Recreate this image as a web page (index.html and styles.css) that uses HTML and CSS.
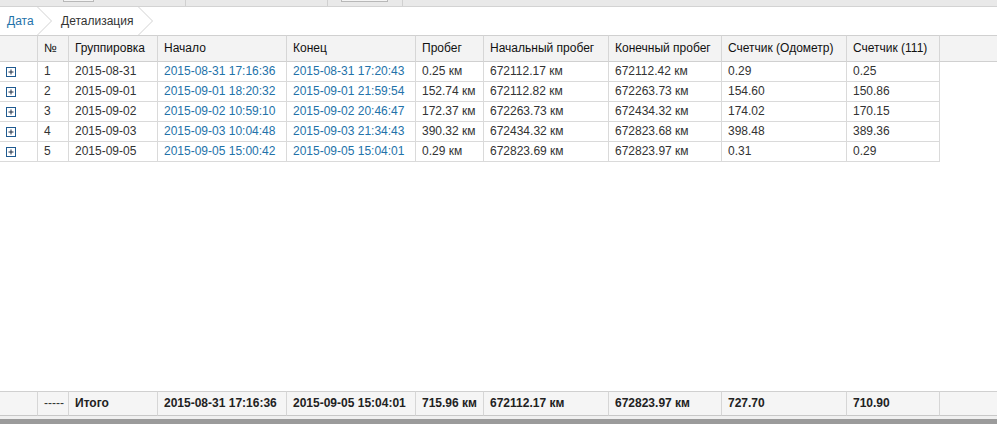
FILE: index.html
```html
<!DOCTYPE html>
<html lang="ru">
<head>
<meta charset="utf-8">
<title>Детализация</title>
<link rel="stylesheet" href="styles.css">
</head>
<body>
<div class="topbar">
  <div class="tb-item tb-a"><div class="tb-box tb-box-a"></div></div>
  <div class="tb-item tb-b"></div>
  <div class="tb-item tb-c"><div class="tb-box tb-box-c"></div></div>
  <div class="tb-rest"></div>
</div>
<div class="crumbs">
  <a class="crumb crumb-first">Дата</a>
  <svg class="chev" width="16" height="28" viewBox="0 0 16 28"><polyline points="0.5,0 14.5,14 0.5,28" fill="none" stroke="#d2d2d2" stroke-width="1"/></svg>
  <span class="crumb crumb-cur">Детализация</span>
  <svg class="chev" width="16" height="28" viewBox="0 0 16 28"><polyline points="0.5,0 14.5,14 0.5,28" fill="none" stroke="#d2d2d2" stroke-width="1"/></svg>
</div>
<div class="grid-wrap">
  <table class="grid">
    <colgroup>
      <col class="c1"><col class="c2"><col class="c3"><col class="c4"><col class="c5"><col class="c6"><col class="c7"><col class="c8"><col class="c9"><col class="c10"><col>
    </colgroup>
    <thead>
      <tr>
        <th></th><th>№</th><th>Группировка</th><th>Начало</th><th>Конец</th><th>Пробег</th><th>Начальный пробег</th><th>Конечный пробег</th><th>Счетчик (Одометр)</th><th>Счетчик (111)</th><th class="filler"></th>
      </tr>
    </thead>
    <tbody>
      <tr>
        <td class="exp"><svg class="plus" width="10" height="10" viewBox="0 0 10 10"><rect x="0.5" y="0.5" width="9" height="9" fill="#fff" stroke="#1f5a90"/><path d="M2.5 5h5M5 2.5v5" stroke="#1e2f45" stroke-width="1"/></svg></td>
        <td>1</td><td>2015-08-31</td><td class="lnk">2015-08-31 17:16:36</td><td class="lnk">2015-08-31 17:20:43</td><td>0.25 км</td><td>672112.17 км</td><td>672112.42 км</td><td>0.29</td><td>0.25</td><td class="filler"></td>
      </tr>
      <tr>
        <td class="exp"><svg class="plus" width="10" height="10" viewBox="0 0 10 10"><rect x="0.5" y="0.5" width="9" height="9" fill="#fff" stroke="#1f5a90"/><path d="M2.5 5h5M5 2.5v5" stroke="#1e2f45" stroke-width="1"/></svg></td>
        <td>2</td><td>2015-09-01</td><td class="lnk">2015-09-01 18:20:32</td><td class="lnk">2015-09-01 21:59:54</td><td>152.74 км</td><td>672112.82 км</td><td>672263.73 км</td><td>154.60</td><td>150.86</td><td class="filler"></td>
      </tr>
      <tr>
        <td class="exp"><svg class="plus" width="10" height="10" viewBox="0 0 10 10"><rect x="0.5" y="0.5" width="9" height="9" fill="#fff" stroke="#1f5a90"/><path d="M2.5 5h5M5 2.5v5" stroke="#1e2f45" stroke-width="1"/></svg></td>
        <td>3</td><td>2015-09-02</td><td class="lnk">2015-09-02 10:59:10</td><td class="lnk">2015-09-02 20:46:47</td><td>172.37 км</td><td>672263.73 км</td><td>672434.32 км</td><td>174.02</td><td>170.15</td><td class="filler"></td>
      </tr>
      <tr>
        <td class="exp"><svg class="plus" width="10" height="10" viewBox="0 0 10 10"><rect x="0.5" y="0.5" width="9" height="9" fill="#fff" stroke="#1f5a90"/><path d="M2.5 5h5M5 2.5v5" stroke="#1e2f45" stroke-width="1"/></svg></td>
        <td>4</td><td>2015-09-03</td><td class="lnk">2015-09-03 10:04:48</td><td class="lnk">2015-09-03 21:34:43</td><td>390.32 км</td><td>672434.32 км</td><td>672823.68 км</td><td>398.48</td><td>389.36</td><td class="filler"></td>
      </tr>
      <tr>
        <td class="exp"><svg class="plus" width="10" height="10" viewBox="0 0 10 10"><rect x="0.5" y="0.5" width="9" height="9" fill="#fff" stroke="#1f5a90"/><path d="M2.5 5h5M5 2.5v5" stroke="#1e2f45" stroke-width="1"/></svg></td>
        <td>5</td><td>2015-09-05</td><td class="lnk">2015-09-05 15:00:42</td><td class="lnk">2015-09-05 15:04:01</td><td>0.29 км</td><td>672823.69 км</td><td>672823.97 км</td><td>0.31</td><td>0.29</td><td class="filler"></td>
      </tr>
    </tbody>
  </table>
</div>
<table class="grid foot">
  <colgroup>
    <col class="c1"><col class="c2"><col class="c3"><col class="c4"><col class="c5"><col class="c6"><col class="c7"><col class="c8"><col class="c9"><col class="c10"><col>
  </colgroup>
  <tbody>
    <tr>
      <td></td><td class="dash">-----</td><td>Итого</td><td>2015-08-31 17:16:36</td><td>2015-09-05 15:04:01</td><td>715.96 км</td><td>672112.17 км</td><td>672823.97 км</td><td>727.70</td><td>710.90</td><td class="filler"></td>
    </tr>
  </tbody>
</table>
<div class="foot-gap"></div>
<div class="bottom-bar"></div>
</body>
</html>
```

FILE: styles.css
```css
html, body {
  margin: 0;
  padding: 0;
}
body {
  width: 997px;
  height: 424px;
  overflow: hidden;
  display: flex;
  flex-direction: column;
  background: #fff;
  font-family: "Liberation Sans", Arial, sans-serif;
  font-size: 12px;
  color: #333;
}

/* top bar */
.topbar {
  display: flex;
  height: 6px;
  flex: 0 0 6px;
  background: #e9e9e9;
  border-bottom: 1px solid #d3d3d3;
}
.tb-item {
  height: 6px;
  border-right: 1px solid #d0d0d0;
  box-sizing: border-box;
}
.tb-a { width: 186px; }
.tb-b { width: 142px; }
.tb-c { width: 75px; }
.tb-rest { flex: 1; }
.tb-box {
  height: 2px;
  box-sizing: border-box;
  border: 1px solid #b8b8b8;
  border-top: none;
  background: #f4f4f4;
}
.tb-box-a { width: 31px; margin-left: 63px; }
.tb-box-c { width: 47px; margin-left: 13px; }

/* breadcrumbs */
.crumbs {
  display: flex;
  align-items: stretch;
  height: 28px;
  flex: 0 0 28px;
  line-height: 28px;
}
.crumb {
  box-sizing: border-box;
  white-space: nowrap;
}
.crumb-first {
  width: 37px;
  padding-left: 7px;
  color: #2372a9;
}
.crumb-cur {
  width: 85px;
  padding-left: 8px;
  color: #333;
}
.chev {
  display: block;
  flex: 0 0 16px;
}

/* grid */
.grid-wrap {
  flex: 1;
  min-height: 0;
}
.grid {
  width: 997px;
  table-layout: fixed;
  border-collapse: separate;
  border-spacing: 0;
}
.c1 { width: 38px; }
.c2 { width: 31px; }
.c3 { width: 89px; }
.c4 { width: 129px; }
.c5 { width: 129px; }
.c6 { width: 68px; }
.c7 { width: 125px; }
.c8 { width: 113px; }
.c9 { width: 125px; }
.c10 { width: 93px; }

.grid th {
  background: #f3f3f3;
  border-top: 1px solid #d0d0d0;
  border-bottom: 1px solid #d0d0d0;
  border-right: 1px solid #d6d6d6;
  padding: 0 0 0 6px;
  line-height: 25px;
  text-align: left;
  font-weight: normal;
  color: #111;
  white-space: nowrap;
  overflow: hidden;
}
.grid th.filler {
  border-right: none;
}
.grid td {
  border-bottom: 1px solid #dadada;
  border-right: 1px solid #dadada;
  padding: 0 0 0 6px;
  line-height: 19px;
  white-space: nowrap;
  overflow: hidden;
  color: #333;
}
.grid td.filler {
  border: none;
}
.grid td.exp {
  padding-left: 6px;
}
.plus {
  display: block;
}
.grid td.lnk {
  color: #2372a9;
}

/* footer totals */
.foot {
  flex: 0 0 auto;
}
.foot td {
  background: #f5f5f5;
  border-top: 1px solid #d0d0d0;
  border-bottom: 1px solid #c8c8c8;
  border-right: 1px solid #d6d6d6;
  line-height: 23px;
  font-weight: bold;
  color: #222;
}
.foot td.dash {
  font-weight: normal;
  color: #333;
}
.foot td.filler {
  border-top: 1px solid #d0d0d0;
  border-bottom: 1px solid #c8c8c8;
  border-right: none;
}
.foot-gap {
  flex: 0 0 3px;
  background: #f0f0f0;
}
.bottom-bar {
  flex: 0 0 5px;
  background: #9b9b9b;
}
```
